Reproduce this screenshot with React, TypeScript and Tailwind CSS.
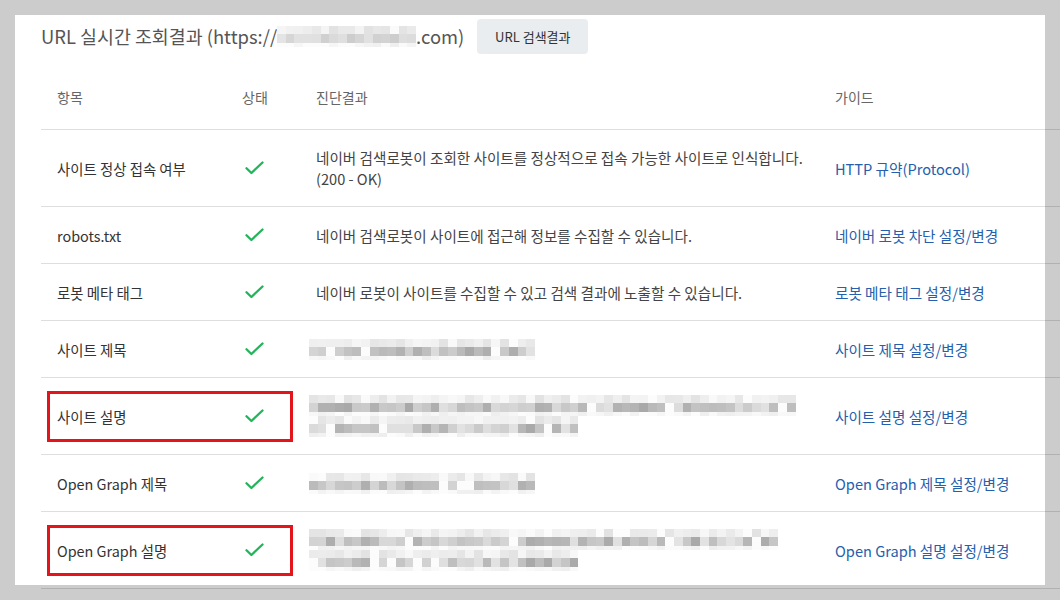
import React from 'react'

type Row = {
  item: string
  diag?: React.ReactNode
  mosaic?: { widths: number[]; seed: number }
  guide: string
  tall?: boolean
  boxed?: boolean
}

const rows: Row[] = [
  {
    item: '사이트 정상 접속 여부',
    diag: (
      <>
        네이버 검색로봇이 조회한 사이트를 정상적으로 접속 가능한 사이트로 인식합니다.
        <br />
        (200 - OK)
      </>
    ),
    guide: 'HTTP 규약(Protocol)',
    tall: true,
  },
  {
    item: 'robots.txt',
    diag: '네이버 검색로봇이 사이트에 접근해 정보를 수집할 수 있습니다.',
    guide: '네이버 로봇 차단 설정/변경',
  },
  {
    item: '로봇 메타 태그',
    diag: '네이버 로봇이 사이트를 수집할 수 있고 검색 결과에 노출할 수 있습니다.',
    guide: '로봇 메타 태그 설정/변경',
  },
  { item: '사이트 제목', mosaic: { widths: [228], seed: 11 }, guide: '사이트 제목 설정/변경' },
  {
    item: '사이트 설명',
    mosaic: { widths: [490, 270], seed: 23 },
    guide: '사이트 설명 설정/변경',
    tall: true,
    boxed: true,
  },
  { item: 'Open Graph 제목', mosaic: { widths: [225], seed: 37 }, guide: 'Open Graph 제목 설정/변경' },
  {
    item: 'Open Graph 설명',
    mosaic: { widths: [470, 270], seed: 51 },
    guide: 'Open Graph 설명 설정/변경',
    tall: true,
    boxed: true,
  },
]

// simple seeded random so the blur blocks stay the same each render
function rng(seed: number) {
  let s = seed >>> 0
  return () => {
    s = (s + 0x6d2b79f5) >>> 0
    let t = s
    t = Math.imul(t ^ (t >>> 15), t | 1)
    t ^= t + Math.imul(t ^ (t >>> 7), t | 61)
    return ((t ^ (t >>> 14)) >>> 0) / 4294967296
  }
}

const bands = [
  { h: 8, min: 226, max: 250 },
  { h: 9, min: 168, max: 228 },
  { h: 4, min: 238, max: 253 },
]

function Mosaic({ widths, seed, light }: { widths: number[]; seed: number; light?: boolean }) {
  const rand = rng(seed)
  return (
    <div className="flex flex-col">
      {widths.map((w, li) => (
        <div key={li} className="flex flex-col">
          {bands.map((b, bi) => {
            const cells = Math.round(w / 8.7)
            const min = light ? Math.max(b.min, 205) : b.min
            return (
              <div key={bi} className="flex">
                {Array.from({ length: cells }).map((_, ci) => {
                  const gap = rand() < 0.08
                  const v = gap ? 252 : Math.round(min + rand() * (b.max - min))
                  return (
                    <div
                      key={ci}
                      className="shrink-0 w-[8.7px]"
                      style={{ height: b.h, background: `rgb(${v},${v},${v})` }}
                    />
                  )
                })}
              </div>
            )
          })}
        </div>
      ))}
    </div>
  )
}

function Check() {
  return (
    <svg width="19" height="14" viewBox="0 0 19 14" fill="none" className="ml-[3px]">
      <path
        d="M1.5 7.2L6.4 12L17.5 1.5"
        stroke="#22b45a"
        strokeWidth="2.3"
        strokeLinecap="round"
        strokeLinejoin="round"
      />
    </svg>
  )
}

export default function App() {
  return (
    <div className="relative w-[1060px] h-[600px] overflow-hidden bg-white font-['Noto_Sans_CJK_KR','Noto_Sans',sans-serif]">
      <div className="pl-[41px] pt-[19px]">
        {/* 제목 + 버튼 */}
        <div className="flex items-center h-[35px]">
          <h2 className="text-[18.4px] font-normal text-[#555] flex items-center">
            URL 실시간 조회결과 (https://
            <span className="inline-flex flex-col">
              <Mosaic widths={[135]} seed={5} light />
            </span>
            .com)
          </h2>
          <button className="ml-[13px] w-[111px] h-[35px] rounded-[4px] bg-[#eaedf0] text-[13px] text-[#333]">
            URL 검색결과
          </button>
        </div>

        {/* 표 */}
        <div className="w-[1019px]">
          <div className="flex items-end h-[76px] pb-[21px] border-b border-[#dedede] text-[14px] leading-[21px] text-[#666]">
            <div className="w-[185px] pl-[16px]">항목</div>
            <div className="w-[74px] pl-[16px]">상태</div>
            <div className="w-[519px] pl-[16px]">진단결과</div>
            <div className="flex-1 pl-[16px]">가이드</div>
          </div>

          {rows.map((r, i) => (
            <div
              key={i}
              className={`relative flex items-center border-b border-[#dedede] leading-[21px] ${
                r.tall ? 'h-[77px]' : 'h-[57px]'
              }`}
            >
              <div className="w-[185px] pl-[16px] text-[14.4px] text-[#333]">{r.item}</div>
              <div className="w-[74px] pl-[16px] flex items-center">
                <Check />
              </div>
              <div className="w-[519px] pl-[16px] text-[14.6px] text-[#444]">
                {r.mosaic ? (
                  <div className="-ml-[7px]">
                    <Mosaic widths={r.mosaic.widths} seed={r.mosaic.seed} />
                  </div>
                ) : (
                  r.diag
                )}
              </div>
              <div className="flex-1 pl-[16px] text-[14.6px] text-[#2460ad]">{r.guide}</div>

              {r.boxed && (
                <div className="absolute left-[6px] top-[13px] w-[246px] h-[51px] border-[3px] border-[#e4141b]" />
              )}
            </div>
          ))}
        </div>
      </div>

      {/* 바깥 회색 영역 */}
      <div className="absolute inset-x-0 top-0 h-[15px] bg-black/20" />
      <div className="absolute left-0 top-[15px] bottom-[15px] w-[15px] bg-black/20" />
      <div className="absolute right-0 top-[15px] bottom-[15px] w-[15px] bg-black/20" />
      <div className="absolute inset-x-0 bottom-0 h-[15px] bg-black/20" />
    </div>
  )
}
